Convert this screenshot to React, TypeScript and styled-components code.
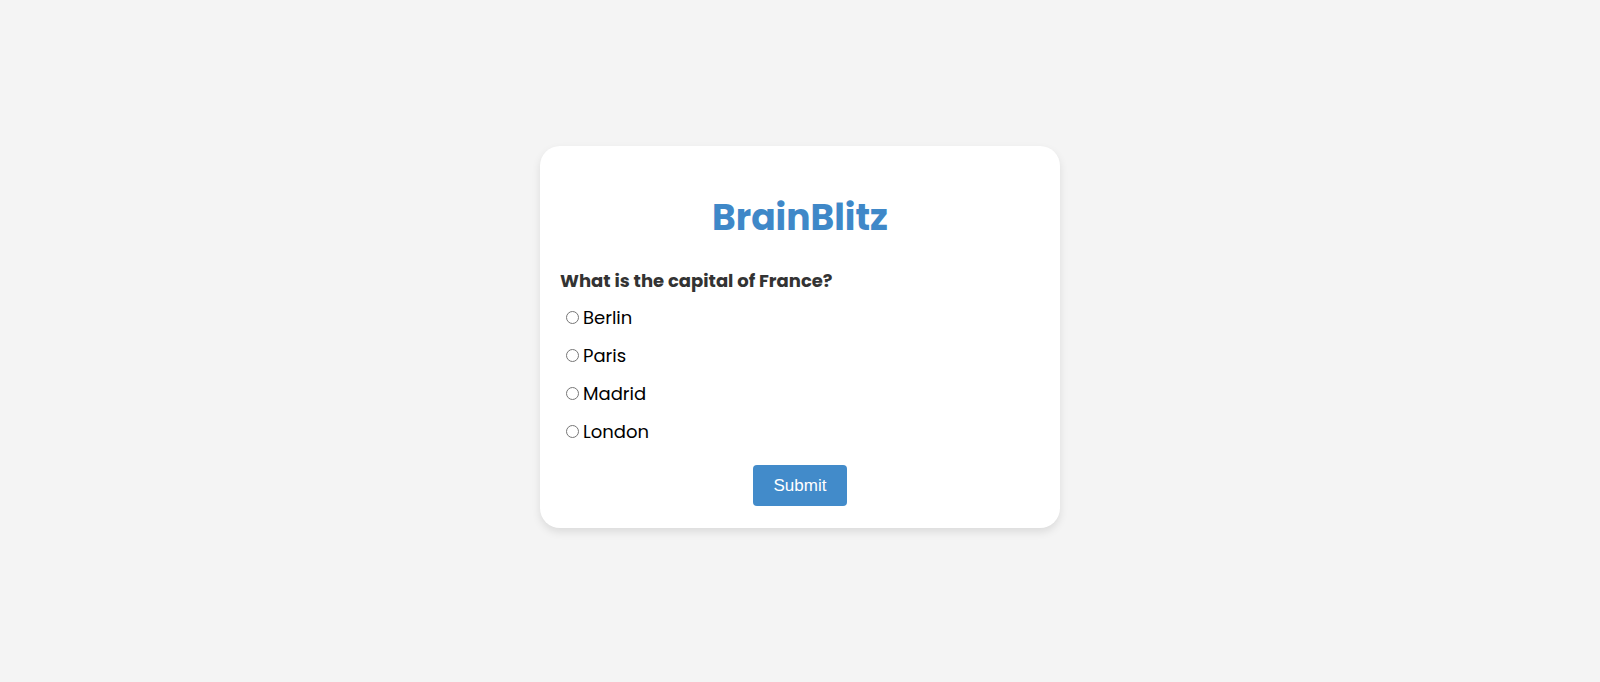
import React, { useState } from 'react';
import styled, { createGlobalStyle } from 'styled-components';

const GlobalStyle = createGlobalStyle`
  html, body {
    margin: 0;
    padding: 0;
    background-color: #f4f4f4;
    font-family: "Poppins", "DejaVu Sans", sans-serif;
  }
`

const Page = styled.main`
  min-height: 682px;
  display: flex;
  align-items: center;
  justify-content: center;
  padding-bottom: 8px;
  box-sizing: border-box;
`

const Card = styled.div`
  width: 520px;
  box-sizing: border-box;
  background-color: #ffffff;
  border-radius: 20px;
  padding: 21px 20px 22px;
  box-shadow: 0 4px 8px rgba(0, 0, 0, 0.1);
`

const Title = styled.h1`
  margin: 30px 0 28px;
  text-align: center;
  font-size: 36px;
  line-height: 42px;
  font-weight: 700;
  color: #3f88c8;
`

const Question = styled.h2`
  margin: 0 0 10px;
  font-size: 18px;
  line-height: 27px;
  font-weight: 700;
  color: #333333;
`

const Options = styled.div`
  display: flex;
  flex-direction: column;
  gap: 11px;
`

const Option = styled.label`
  display: flex;
  align-items: center;
  font-size: 18px;
  line-height: 27px;
  color: #000000;
  cursor: pointer;

  input {
    margin: 0 4px 0 6px;
    width: 13px;
    height: 13px;
  }
`

const Footer = styled.div`
  display: flex;
  justify-content: center;
  margin-top: 20px;
`

const SubmitButton = styled.button`
  font-family: "Liberation Sans", Arial, sans-serif;
  font-size: 17px;
  line-height: 19px;
  padding: 11px 21px;
  border: none;
  border-radius: 4px;
  background-color: #428bca;
  color: #ffffff;
  cursor: pointer;
`

const answers = ['Berlin', 'Paris', 'Madrid', 'London'];

const App: React.FC = () => {
  const [picked, setPicked] = useState('');

  return (
    <React.Fragment>
      <GlobalStyle />
      <Page>
        <Card>
          <Title>BrainBlitz</Title>
          <Question>What is the capital of France?</Question>
          <Options>
            {answers.map((a) => (
              <Option key={a}>
                <input
                  type="radio"
                  name="answer"
                  value={a}
                  checked={picked === a}
                  onChange={() => setPicked(a)}
                />
                {a}
              </Option>
            ))}
          </Options>
          <Footer>
            <SubmitButton type="button">Submit</SubmitButton>
          </Footer>
        </Card>
      </Page>
    </React.Fragment>
  );
}

export default App;
